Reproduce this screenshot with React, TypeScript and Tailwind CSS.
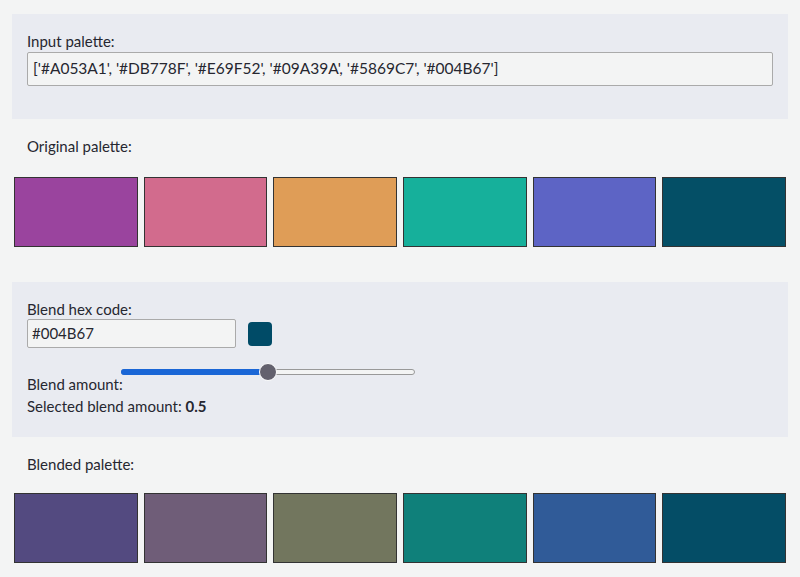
export default function App() {
  const orig = ["#9a449e", "#d26b8d", "#df9d57", "#16b09b", "#5d64c5", "#044f66"];
  const blend = ["#534a80", "#6f5d78", "#72765e", "#0f807a", "#305b98", "#044d66"];
  const Row = ({ c }: { c: string[] }) => (
    <div className="flex gap-[6px] px-[14px]">
      {c.map((x, i) => (
        <div key={i} className="h-[70px] flex-1 border border-[#333]" style={{ background: x }} />
      ))}
    </div>
  );
  return (
    <div className="w-[800px] h-[577px] bg-[#f3f4f4] text-[15px] text-[#262730] overflow-hidden" style={{ fontFamily: "Lato, 'Noto Sans', sans-serif" }}>
      <div className="h-[14px]" />
      <div className="mx-[12px] bg-[#e9ebf1] h-[105px] px-[15px] pt-[17px]">
        <div className="leading-[20px]">Input palette:</div>
        <div className="mt-[1px] h-[34px] border border-[#aaa] rounded-[2px] bg-[#f3f4f4] flex items-center px-[5px] text-[15.5px]">
          ['#A053A1', '#DB778F', '#E69F52', '#09A39A', '#5869C7', '#004B67']
        </div>
      </div>
      <div className="px-[27px] pt-[17px] h-[58px] leading-[20px]">Original palette:</div>
      <Row c={orig} />
      <div className="h-[35px]" />
      <div className="mx-[12px] bg-[#e9ebf1] h-[155px] px-[15px] pt-[17px]">
        <div className="leading-[20px]">Blend hex code:</div>
        <div className="flex items-center gap-[12px]">
          <div className="w-[209px] h-[29px] border border-[#aaa] rounded-[2px] bg-[#f3f4f4] flex items-center px-[4px]">#004B67</div>
          <div className="w-[24px] h-[24px] rounded-[4px] bg-[#004b67]" />
        </div>
        <div className="flex items-end mt-[22px] h-[24px]">
          <span className="leading-[20px]">Blend amount:</span>
          <div className="relative w-[294px] h-[20px] mb-[8px] -ml-[2px]">
            <div className="absolute left-0 right-0 top-[3px] h-[6px] rounded-full border border-[#999] bg-[#f3f4f4]" />
            <div className="absolute left-0 w-[147px] top-[3px] h-[6px] rounded-l-full bg-[#1a66d6]" />
            <div className="absolute left-[138px] top-[-3px] w-[18px] h-[18px] rounded-full bg-[#63616e] border border-white" />
          </div>
        </div>
        <div className="mt-[2px] leading-[20px]">Selected blend amount: <b>0.5</b></div>
      </div>
      <div className="px-[27px] pt-[17px] h-[56px] leading-[20px]">Blended palette:</div>
      <Row c={blend} />
    </div>
  );
}
